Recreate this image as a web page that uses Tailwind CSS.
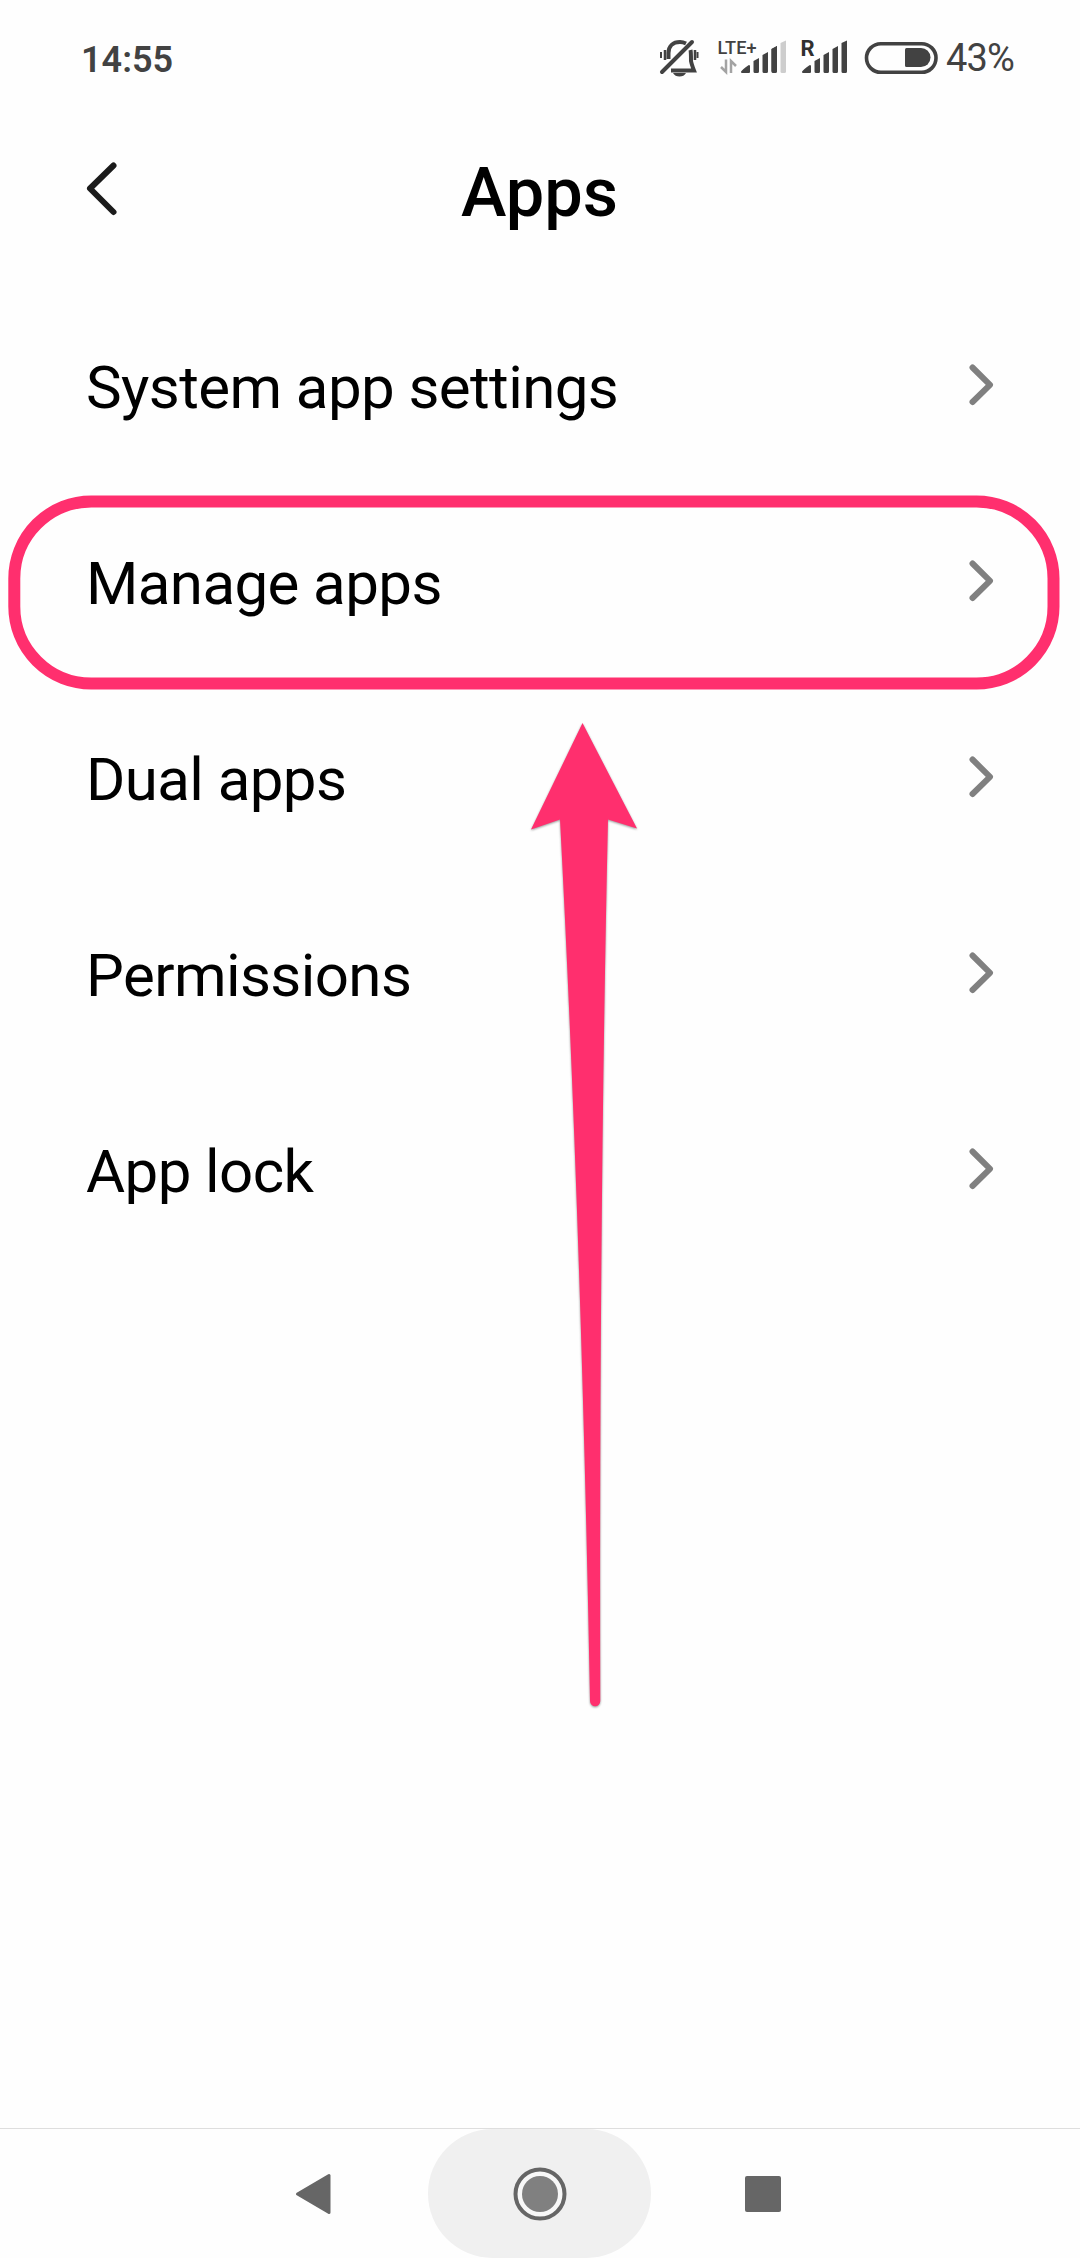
<!DOCTYPE html>
<html lang="en">
<head>
<meta charset="utf-8">
<title>Apps</title>
<script src="https://cdn.jsdelivr.net/npm/@tailwindcss/browser@4"></script>
</head>
<body class="bg-[#fefefe]">
<div class="relative w-[1080px] h-[2258px] flex flex-col bg-[#fefefe] text-black font-[Roboto,sans-serif] overflow-hidden">
  <header class="h-[100px] shrink-0 flex justify-between text-[#424242]">
    <div class="pl-[81px] pt-[39px] text-[36px] leading-[42px] font-semibold">14:55</div>
    <div class="flex">
      <svg class="w-[287px] h-[100px]" viewBox="653 0 287 100" fill="none">
        <g stroke="#424242" stroke-width="4">
          <path d="M662 72 692 42" stroke-linecap="round"/>
          <path d="M668.500 59V53C668.500 46 673 42 680 42Q683 42 686 43.500"/>
          <path d="M690.500 50Q691 52 691 61Q691.500 64 694 70.500H671"/>
          <path d="M665 50v10M695 50v10" stroke-width="2.500"/>
          <path d="M661 52v6M697.500 52v6" stroke-width="2"/>
        </g>
        <path d="M673 73h13q-2 3.500-6.500 3.500T673 73Z" fill="#424242"/>
        <g stroke="#a3a3a3" stroke-width="2.500"><path d="M726 59.500V72L721 67M731 73V61l5 5"/></g>
        <g fill="#424242">
          <path d="M742 72q1-2 7-6v6Z" stroke="#424242" stroke-width="2" stroke-linejoin="round"/>
          <path d="M753.500 61l5.500-3v13.500q0 1.500-1.500 1.500H755q-1.500 0-1.500-1.500ZM762.500 55l5.500-3v19.500q0 1.500-1.500 1.500H764q-1.500 0-1.500-1.500ZM771.500 49l5.500-3v25.500q0 1.500-1.500 1.500H773q-1.500 0-1.500-1.500Z"/>
          <path d="M803 72q1-2 7-6v6Z" stroke="#424242" stroke-width="2" stroke-linejoin="round"/>
          <path d="M814.500 61l5.500-3v13.500q0 1.500-1.500 1.500H816q-1.500 0-1.500-1.500ZM823.500 55l5.500-3v19.500q0 1.500-1.500 1.500H825q-1.500 0-1.500-1.500ZM832.500 49l5.500-3v25.500q0 1.500-1.500 1.500H834q-1.500 0-1.500-1.500ZM841.500 43l5.500-2.500v31q0 1.500-1.500 1.500H843q-1.500 0-1.500-1.500Z"/>
          <path d="M771.500 49l5.500-3v25.500h-5.500Z"/>
        </g>
        <path d="M780.500 43l5.500-2.500v31q0 1.500-1.500 1.500H782q-1.500 0-1.500-1.500Z" fill="#cdcdcd"/>
        <text x="717.500" y="54" font-size="18" font-weight="500" fill="#424242" textLength="39" lengthAdjust="spacingAndGlyphs">LTE+</text>
        <text x="800.500" y="55.500" font-size="22" font-weight="700" fill="#303030">R</text>
        <rect x="866.500" y="43.700" width="69.500" height="28.600" rx="14.300" stroke="#424242" stroke-width="3.600"/>
        <path d="M906.500 48H921a9.500 9.500 0 0 1 0 19H906.500q-1.500 0-1.500-1.500v-16q0-1.500 1.500-1.500Z" fill="#424242"/>
      </svg>
      <div class="w-[140px] pl-[6px] pt-[36px] text-[38px] leading-[44px] tracking-[-0.8px]">43%</div>
    </div>
  </header>
  <div class="h-[187px] shrink-0 grid grid-cols-[160px_1fr_160px]">
    <svg class="w-[160px] h-[187px]" viewBox="0 100 160 187" fill="none"><path d="M113.500 165.500 90 188.500l23.500 23.500" stroke="#1b1b1b" stroke-width="6" stroke-linecap="round" stroke-linejoin="round"/></svg>
    <h1 class="pt-[53px] pr-[1px] text-center text-[68.5px] leading-[80px] font-medium">Apps</h1>
  </div>
  <main class="grow text-[60px] leading-[70px] tracking-[-0.58px]">
    <div class="h-[196px] pl-[86px] pr-[86px] flex items-center justify-between"><span class="pt-[5px]">System app settings</span><svg class="w-[25px] h-[44px]" viewBox="0 0 25 44"><path d="M3.500 4.500 21 21.800 3.500 39" fill="none" stroke="#808080" stroke-width="6" stroke-linecap="round" stroke-linejoin="round"/></svg></div>
    <div class="h-[196px] pl-[86px] pr-[86px] flex items-center justify-between"><span class="pt-[5px]">Manage apps</span><svg class="w-[25px] h-[44px]" viewBox="0 0 25 44"><path d="M3.500 4.500 21 21.800 3.500 39" fill="none" stroke="#808080" stroke-width="6" stroke-linecap="round" stroke-linejoin="round"/></svg></div>
    <div class="h-[196px] pl-[86px] pr-[86px] flex items-center justify-between"><span class="pt-[5px]">Dual apps</span><svg class="w-[25px] h-[44px]" viewBox="0 0 25 44"><path d="M3.500 4.500 21 21.800 3.500 39" fill="none" stroke="#808080" stroke-width="6" stroke-linecap="round" stroke-linejoin="round"/></svg></div>
    <div class="h-[196px] pl-[86px] pr-[86px] flex items-center justify-between"><span class="pt-[5px]">Permissions</span><svg class="w-[25px] h-[44px]" viewBox="0 0 25 44"><path d="M3.500 4.500 21 21.800 3.500 39" fill="none" stroke="#808080" stroke-width="6" stroke-linecap="round" stroke-linejoin="round"/></svg></div>
    <div class="h-[196px] pl-[86px] pr-[86px] flex items-center justify-between"><span class="pt-[5px]">App lock</span><svg class="w-[25px] h-[44px]" viewBox="0 0 25 44"><path d="M3.500 4.500 21 21.800 3.500 39" fill="none" stroke="#808080" stroke-width="6" stroke-linecap="round" stroke-linejoin="round"/></svg></div>
  </main>
  <nav class="h-[130px] shrink-0 border-t border-[#dedede] flex items-center justify-center">
    <div class="w-[223px] h-[129px] pr-[10px] flex items-center justify-center">
      <svg class="w-[36px] h-[42px]" viewBox="0 0 36 42"><path d="M2.500 21 34 2.500v37Z" fill="#666" stroke="#666" stroke-width="3" stroke-linejoin="round"/></svg>
    </div>
    <div class="w-[223px] h-[129px] -ml-px rounded-full bg-[#f0f0f0] flex items-center justify-center">
      <svg class="w-[54px] h-[54px]" viewBox="0 0 54 54"><circle cx="27" cy="27" r="24.500" fill="#f8f8f8" stroke="#666" stroke-width="4"/><circle cx="27" cy="27" r="18" fill="#808080"/></svg>
    </div>
    <div class="w-[223px] h-[129px] flex items-center justify-center"><div class="size-[36px] rounded-[2px] bg-[#666]"></div></div>
  </nav>
  <!-- Annotations: highlight frame and pointer arrow -->
  <svg class="absolute inset-0 w-[1080px] h-[2258px]" viewBox="0 0 1080 2258" fill="none">
    <rect x="14.300" y="501.500" width="1039.200" height="182" rx="77" stroke="#ff2f6e" stroke-width="12"/>
    <path class="drop-shadow-[0_1px_1px_rgba(0,0,0,0.4)]" d="M582.500 723 637 828.500 608 819.500Q599 1220 600.300 1701a5 5 0 0 1-10.300 0Q581 1220 560 819.500L531 829.500Z" fill="#ff2f6e"/>
  </svg>
</div>
</body>
</html>
